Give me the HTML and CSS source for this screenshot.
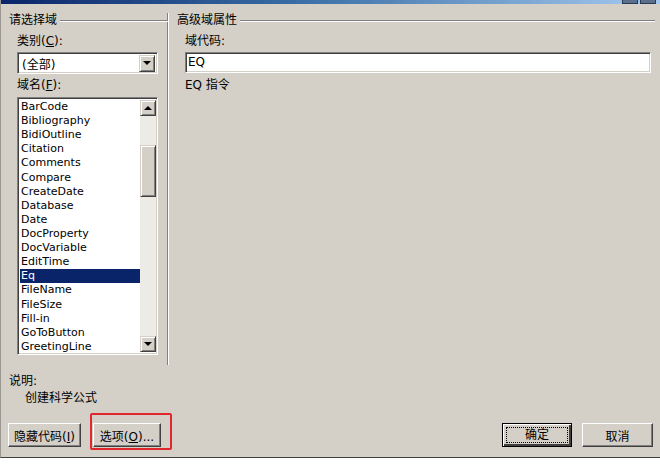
FILE: index.html
```html
<!DOCTYPE html>
<html lang="zh-CN">
<head>
  <meta charset="UTF-8" />
  <title>域</title>
  <link rel="stylesheet" href="styles.css">
</head>
<body>
  <div class="dialog">
    <div class="titlebar">
      <span class="tb-btn"></span>
      <span class="tb-btn"></span>
    </div>

    <div class="panes">
      <div class="pane pane-left">
        <div class="group-title"><span>请选择域</span></div>
        <div class="field">
          <div class="label">类别(<u>C</u>):</div>
          <div class="select">
            <span class="select-value">(全部)</span>
            <span class="drop-btn"><i class="arrow-down"></i></span>
          </div>
          <div class="label">域名(<u>F</u>):</div>
          <div class="listbox">
            <ul class="items" id="fieldList"></ul>
            <div class="scrollbar">
              <span class="sb-btn"><i class="arrow-up"></i></span>
              <div class="sb-track">
                <span class="sb-thumb"></span>
              </div>
              <span class="sb-btn"><i class="arrow-down"></i></span>
            </div>
          </div>
        </div>
      </div>

      <div class="pane pane-right">
        <div class="group-title"><span>高级域属性</span></div>
        <div class="field">
          <div class="label">域代码:</div>
          <div class="textbox">EQ</div>
          <div class="label">EQ 指令</div>
        </div>
      </div>
    </div>

    <div class="desc">
      <div class="label">说明:</div>
      <div class="desc-text">创建科学公式</div>
    </div>

    <div class="buttons">
      <div class="btn-left">
        <button class="btn btn-code">隐藏代码(<u>I</u>)</button>
        <span class="mark-wrap">
          <button class="btn btn-opts">选项(<u>O</u>)...</button>
          <span class="mark"></span>
        </span>
      </div>
      <div class="btn-right">
        <button class="btn btn-default"><span class="focus">确定</span></button>
        <button class="btn">取消</button>
      </div>
    </div>
  </div>

  <script>
    const fields = [
      'BarCode', 'Bibliography', 'BidiOutline', 'Citation', 'Comments',
      'Compare', 'CreateDate', 'Database', 'Date', 'DocProperty',
      'DocVariable', 'EditTime', 'Eq', 'FileName', 'FileSize',
      'Fill-in', 'GoToButton', 'GreetingLine'
    ];
    const list = document.getElementById('fieldList');
    fields.forEach(name => {
      const li = document.createElement('li');
      li.textContent = name;
      if (name === 'Eq') li.classList.add('selected');
      list.appendChild(li);
    });
  </script>
</body>
</html>
```

FILE: styles.css
```css
body {
  margin: 0;
  background: #fff;
  font-family: "DejaVu Sans", "Noto Sans CJK SC", sans-serif;
  font-size: 12px;
  color: #000;
}
.dialog {
  width: 660px;
  height: 458px;
  box-sizing: border-box;
  background: #d4d0c8;
  border-left: 1px solid #9a9890;
  border-bottom: 1px solid #404040;
  display: flex;
  flex-direction: column;
}
.titlebar {
  height: 4px;
  background: linear-gradient(to right, #0a246a, #3a6ea5 45%, #a6caf0);
  display: flex;
  justify-content: flex-end;
  gap: 2px;
  padding-right: 4px;
}
.tb-btn {
  width: 14px;
  height: 3px;
  background: #5a6f8c;
  border: 1px solid #2a3a55;
  border-top: none;
}
.panes {
  display: flex;
  height: 361px;
  padding-top: 9px;
  box-sizing: border-box;
}
.pane-left {
  width: 158px;
  padding-left: 8px;
  border-right: 1px solid #808080;
  box-shadow: 1px 0 0 #fff;
}
.pane-right {
  flex: 1;
  padding-left: 9px;
  padding-right: 5px;
}
.group-title {
  display: flex;
  align-items: center;
  height: 14px;
  line-height: 14px;
}
.group-title::after {
  content: "";
  flex: 1;
  height: 0;
  border-top: 1px solid #808080;
  border-bottom: 1px solid #fff;
  margin-left: 3px;
  margin-top: 2px;
}
.pane-left .group-title {
  margin-right: -1px;
}
.field {
  padding-left: 8px;
}
.pane-left .field {
  width: 141px;
}
.pane-right .field {
  padding-right: 4px;
}
.label {
  height: 14px;
  line-height: 14px;
  margin-top: 7px;
}
.select, .textbox, .listbox {
  box-sizing: border-box;
  background: #fff;
  border: 1px solid;
  border-color: #808080 #fff #fff #808080;
  box-shadow: inset 1px 1px #404040, inset -1px -1px #d4d0c8;
}
.select {
  margin-top: 4px;
  height: 22px;
  display: flex;
  align-items: center;
  padding: 2px;
  margin-bottom: -3px;
}
.select-value {
  flex: 1;
  padding-left: 2px;
}
.drop-btn, .sb-btn {
  width: 16px;
  height: 16px;
  box-sizing: border-box;
  background: #d4d0c8;
  border: 1px solid;
  border-color: #d4d0c8 #404040 #404040 #d4d0c8;
  box-shadow: inset 1px 1px #fff, inset -1px -1px #808080;
  display: flex;
  align-items: center;
  justify-content: center;
}
.drop-btn {
  height: 17px;
}
.arrow-down, .arrow-up {
  width: 0;
  height: 0;
  border-left: 4px solid transparent;
  border-right: 4px solid transparent;
}
.arrow-down {
  border-top: 4px solid #000;
}
.arrow-up {
  border-bottom: 4px solid #000;
}
.listbox {
  margin-top: 5px;
  height: 258px;
  display: flex;
  padding: 2px 1px 2px 2px;
}
.items {
  flex: 1;
  list-style: none;
  margin: 0;
  padding: 0;
  font-size: 11px;
}
.items li {
  height: 14.12px;
  line-height: 14px;
  padding-left: 1px;
}
.items li.selected {
  background: #0a246a;
  color: #fff;
}
.scrollbar {
  width: 16px;
  display: flex;
  flex-direction: column;
}
.sb-track {
  flex: 1;
  background: #ecebe6;
  padding-top: 29px;
}
.sb-thumb {
  display: block;
  height: 52px;
  box-sizing: border-box;
  background: #d4d0c8;
  border: 1px solid;
  border-color: #d4d0c8 #404040 #404040 #d4d0c8;
  box-shadow: inset 1px 1px #fff, inset -1px -1px #808080;
}
.textbox {
  margin-top: 4px;
  height: 21px;
  line-height: 19px;
  padding-left: 2px;
  margin-bottom: -2px;
}
.desc {
  padding-left: 8px;
}
.desc .label {
  margin-top: 9px;
}
.desc-text {
  padding-left: 16px;
  margin-top: 3px;
  line-height: 14px;
}
.buttons {
  display: flex;
  justify-content: space-between;
  margin-top: 18px;
  padding: 0 7px;
}
.btn-left, .btn-right {
  display: flex;
  gap: 10px;
}
.btn {
  font-family: inherit;
  font-size: 12px;
  height: 24px;
  width: 70px;
  padding: 0;
  margin: 0;
  background: #d4d0c8;
  border: 1px solid;
  border-color: #fff #404040 #404040 #fff;
  box-shadow: inset -1px -1px #808080, inset 1px 1px #d4d0c8;
  color: #000;
}
.btn-code {
  width: 73px;
}
.btn-opts {
  width: 68px;
}
.btn-default {
  border: 1px solid #000;
  box-shadow: inset 1px 1px #fff, inset -2px -2px #404040;
  padding: 3px;
}
.btn-default .focus {
  display: block;
  height: 100%;
  box-sizing: border-box;
  border: 1px dotted #000;
  line-height: 14px;
}
.btn-right .btn:last-child {
  width: 71px;
}
.mark-wrap {
  position: relative;
  margin-left: 2px;
}
.mark {
  position: absolute;
  left: -3px;
  top: -10px;
  width: 82px;
  height: 37px;
  box-sizing: border-box;
  border: 2px solid #e0282c;
  border-radius: 2px;
}
```
